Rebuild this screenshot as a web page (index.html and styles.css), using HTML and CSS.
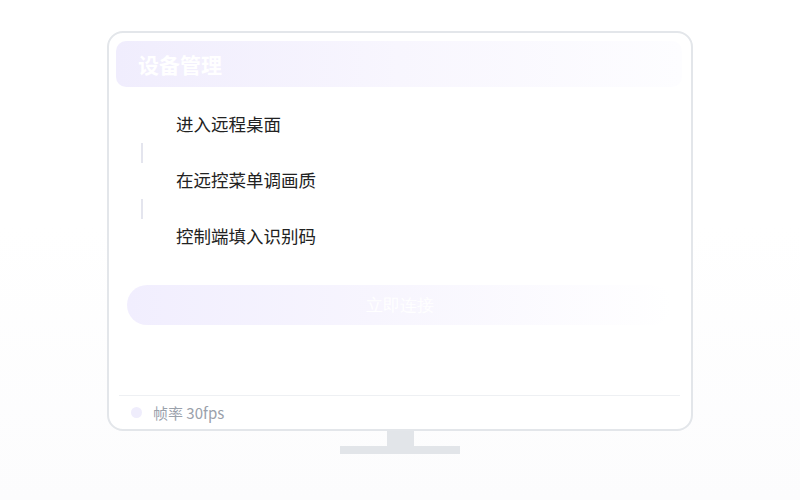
FILE: index.html
```html
<!DOCTYPE html>
<html>
<head>
    <title>远程桌面</title>
    <link rel="stylesheet" href="styles.css">
</head>
<body>
    <div class="scene">
        <!-- Monitor -->
        <div class="monitor">
            <div class="header">
                <span class="title">设备管理</span>
            </div>

            <div class="steps">
                <div class="step">
                    <span class="step-mark"></span>
                    <span class="step-text">进入远程桌面</span>
                </div>
                <div class="step-line"></div>
                <div class="step">
                    <span class="step-mark"></span>
                    <span class="step-text">在远控菜单调画质</span>
                </div>
                <div class="step-line"></div>
                <div class="step">
                    <span class="step-mark"></span>
                    <span class="step-text">控制端填入识别码</span>
                </div>
            </div>

            <button class="connect">立即连接</button>

            <div class="footer">
                <span class="dot"></span>
                <span class="fps">帧率 30fps</span>
            </div>
        </div>

        <!-- Stand -->
        <div class="neck"></div>
        <div class="base"></div>
    </div>
</body>
</html>
```

FILE: styles.css
```css
body {
    margin: 0;
    height: 500px;
    background: linear-gradient(to bottom, #ffffff 0%, #ffffff 45%, #fcfcfd 100%);
    font-family: "Noto Sans CJK SC", "Noto Sans", sans-serif;
}

.scene {
    display: flex;
    flex-direction: column;
    align-items: center;
    padding-top: 31px;
}

.monitor {
    box-sizing: border-box;
    width: 586px;
    height: 400px;
    border: 2px solid #e3e6ea;
    border-radius: 16px;
    background: #fff;
    padding: 8px 9px 0 7px;
    display: flex;
    flex-direction: column;
}

.header {
    height: 46px;
    border-radius: 10px;
    background: linear-gradient(to right, #f0edfd 0%, #f8f6fe 50%, #fdfdff 100%);
    display: flex;
    align-items: center;
    padding-left: 22px;
}

.title {
    color: #fff;
    font-size: 21px;
    font-weight: 700;
}

.steps {
    margin-top: 20px;
    padding-left: 13px;
}

.step {
    height: 36px;
    display: flex;
    align-items: center;
}

.step-mark {
    width: 26px;
    height: 26px;
    border-radius: 50%;
    background: #fff;
}

.step-text {
    margin-left: 21px;
    margin-top: -4px;
    font-size: 17.5px;
    color: #222;
}

.step-line {
    width: 2px;
    height: 20px;
    margin-left: 12px;
    background: #e4e5ee;
}

.connect {
    margin: 30px 10px 0 11px;
    height: 40px;
    border: none;
    border-radius: 20px;
    background: linear-gradient(to right, #f1eefe 0%, #f7f5fe 45%, #ffffff 100%);
    color: #fff;
    font-family: serif;
    font-size: 17px;
    cursor: pointer;
}

.footer {
    margin-top: auto;
    margin-left: 3px;
    margin-right: 2px;
    height: 33px;
    border-top: 1px solid #eef0f3;
    display: flex;
    align-items: center;
    padding-left: 12px;
}

.dot {
    width: 11px;
    height: 11px;
    border-radius: 50%;
    background: #efedfc;
}

.fps {
    margin-left: 11px;
    font-size: 15px;
    color: #9aa1ab;
}

.neck {
    width: 27px;
    height: 15px;
    background: #e2e5e9;
}

.base {
    width: 120px;
    height: 8px;
    background: #e2e5e9;
}
```
